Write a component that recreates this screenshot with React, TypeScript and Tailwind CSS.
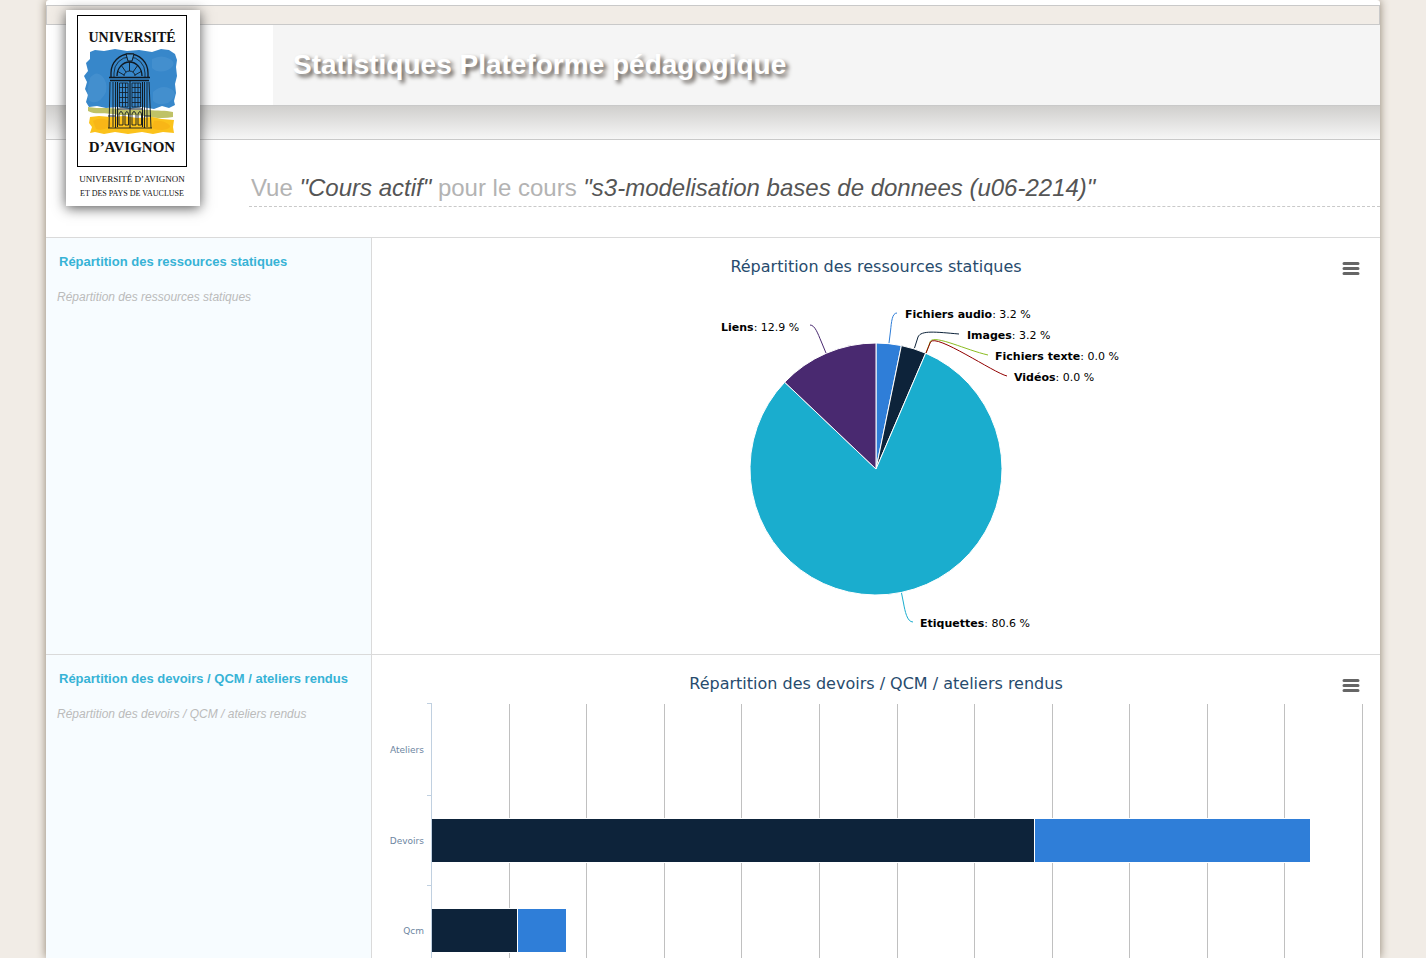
import type { ReactNode } from 'react';

const PIE_RADIUS = 126;

const slices = [
  { name: 'Fichiers audio', from: 0, to: 1 / 31, color: '#2f7ed8' },
  { name: 'Images', from: 1 / 31, to: 2 / 31, color: '#0d233a' },
  { name: 'Etiquettes', from: 2 / 31, to: 27 / 31, color: '#1aadce' },
  { name: 'Liens', from: 27 / 31, to: 1, color: '#492970' },
];

const callouts = [
  { name: 'Fichiers audio', value: '3.2 %', x: 29, y: -151, color: '#2f7ed8', d: 'M21 -156C16 -156 15.500 -147 14.500 -138L13 -126' },
  { name: 'Images', value: '3.2 %', x: 91, y: -130, color: '#0d233a', d: 'M83 -135C60 -137 45 -139 42 -132L38.500 -121' },
  { name: 'Fichiers texte', value: '0.0 %', x: 119, y: -109, color: '#8bbc21', d: 'M112 -114C90 -119 60 -134 54.500 -128L50 -116' },
  { name: 'Vidéos', value: '0.0 %', x: 138, y: -88, color: '#910000', d: 'M131 -93C118 -96 60 -136 54.500 -127L50 -116' },
  { name: 'Etiquettes', value: '80.6 %', x: 44, y: 158, color: '#1aadce', d: 'M37 153C31 153 29 142 27.500 134L25.500 124' },
  { name: 'Liens', value: '12.9 %', x: -155, y: -138, color: '#492970', d: 'M-66 -144C-61 -144 -58 -135 -55 -128L-50 -116' },
];

const bars = [
  { name: 'Ateliers', center: 47, dark: 0, blue: 0 },
  { name: 'Devoirs', center: 138, dark: 64.8, blue: 29.6 },
  { name: 'Qcm', center: 228, dark: 9.2, blue: 5.3 },
];

const gridLines = [1, 2, 3, 4, 5, 6, 7, 8, 9, 10, 11, 12];

function arcPath(from: number, to: number) {
  const point = (t: number) =>
    `${(PIE_RADIUS * Math.sin(t * 2 * Math.PI)).toFixed(2)} ${(-PIE_RADIUS * Math.cos(t * 2 * Math.PI)).toFixed(2)}`;
  return `M0 0L${point(from)}A${PIE_RADIUS} ${PIE_RADIUS} 0 ${to - from > 0.5 ? 1 : 0} 1 ${point(to)}Z`;
}

function Logo() {
  return (
    <svg width="134" height="196" viewBox="0 0 134 196" role="img" aria-label="Université d'Avignon et des Pays de Vaucluse">
      <rect x="11.500" y="5.500" width="109" height="151" fill="#fff" stroke="#000" />
      <path
        fill="#3787ca"
        d="M24 42L29 40L38 41L49 39L61 41L73 40L86 42L95 39L103 40L109 44L111 50L110 57L111 66L109 74L110 83L108 91L109 95L103 98L96 96L88 99L76 97L63 99L51 97L40 98L31 96L23 97L20 92L22 85L19 79L21 72L18 66L22 61L20 53L24 49Z"
      />
      <path fill="#5b9fd6" opacity="0.35" d="M24 68Q30 60 36 66T40 82Q34 94 26 92T24 68ZM86 49Q96 44 104 49T102 60Q92 64 86 58ZM87 82Q96 74 105 79T102 93Q92 96 87 91Z" />
      <path fill="#bfc267" d="M22 97C34 99 43 97 52 99S72 99 82 100S99 100 107 102L107 107C98 109 88 108 79 106S57 106 46 104S30 105 22 101Z" />
      <path fill="#fbc21b" d="M24 107L33 106L45 107L58 106L71 108L86 107L96 109L108 110L107 117L108 123L97 122L87 124L76 122L62 124L49 122L38 124L29 122L24 123L26 117L23 113Z" />
      <path fill="#f6a914" opacity="0.5" d="M27 111Q34 107 41 110T43 117Q36 121 30 119ZM88 111Q96 110 102 114T96 120Q90 120 86 118Z" />
      <g fill="none" stroke="#101820">
        <path strokeWidth="1.300" d="M45 67V63A18.500 19 0 0 1 82 63V67" />
        <path strokeWidth="0.800" d="M48 67V63A15.500 16 0 0 1 79 63V67" />
        <path strokeWidth="1.300" d="M51 66A12.500 14 0 0 1 76 66" />
        <path strokeWidth="0.900" d="M58 66A5.500 5 0 0 1 69 66M63.500 61V52M60 62L55 55M67 62L72 55M58 65L51 61M69 65L76 61" />
        <path strokeWidth="1" fill="#4c95cf" d="M60 44H68L66 51H62Z" />
        <path strokeWidth="1.500" d="M43 67.500H84M44 70.500H83" />
        <path strokeWidth="0.900" d="M44 72L43 118M47 72V117M49.500 72V118M78.500 72V118M81 72V117M83 72L85 118M42 106H49M79 106H85M42 118H86" />
        <path strokeWidth="1.100" d="M51.500 72V117M64 70V118M76.500 72V117M51 99H77" />
        <path strokeWidth="0.800" d="M53.500 73H62V97H53.500ZM66 73H74.500V97H66ZM56.500 73V97M59.500 73V97M69 73V97M72 73V97M53 77.500H62M66 77.500H75M53 82.500H62M66 82.500H75M53 87.500H62M66 87.500H75M53 92.500H62M66 92.500H75" />
        <path strokeWidth="0.900" d="M53 115V104Q55 99 57 104V115ZM59 115V104Q61 99 62.500 104V115ZM66 115V104Q68 99 70 104V115ZM72 115V104Q74 99 75.500 104V115Z" />
      </g>
      <g fill="#111" textAnchor="middle" className="font-['Liberation_Serif',serif]">
        <text x="66" y="32" fontSize="14" fontWeight="700">UNIVERSITÉ</text>
        <text x="66" y="142" fontSize="15" fontWeight="700">D’AVIGNON</text>
        <text x="66" y="172" fontSize="9">UNIVERSITÉ D’AVIGNON</text>
        <text x="66" y="186" fontSize="8">ET DES PAYS DE VAUCLUSE</text>
      </g>
    </svg>
  );
}

function StatSection({ title, children }: { title: string; children: ReactNode }) {
  return (
    <section className="flex border-t border-[#dadada]">
      <div className="w-[326px] shrink-0 border-r border-[#dadada] bg-[#f7fcff] px-[11px] pt-[14px]">
        <h3 className="pl-[2px] text-[13px] leading-5 font-bold text-[#37b3d6]">{title}</h3>
        <p className="pt-[15px] text-[12px] leading-5 text-[#bbb] italic">{title}</p>
      </div>
      <div className="min-w-0 flex-1 font-['DejaVu_Sans',sans-serif]">
        <div className="grid h-12 grid-cols-[1fr_auto_1fr] items-center px-5 pt-[10px]">
          <h4 className="col-start-2 text-base text-[#274b6d]">{title}</h4>
          <button type="button" aria-label="Menu du graphique" className="mt-[2px] justify-self-end">
            <svg width="18" height="14" viewBox="0 0 18 14" className="block" stroke="#666" strokeWidth="3" strokeLinecap="round">
              <path d="M2 2.500H16M2 7.500H16M2 12.500H16" />
            </svg>
          </button>
        </div>
        {children}
      </div>
    </section>
  );
}

function PieChart() {
  return (
    <svg viewBox="-504 -183 1008 368" className="block h-[368px] w-full" fontSize="11">
      {slices.map((s) => (
        <path key={s.name} d={arcPath(s.from, s.to)} fill={s.color} stroke="#fff" strokeLinejoin="round" />
      ))}
      {callouts.map((c) => (
        <g key={c.name}>
          <path d={c.d} fill="none" stroke={c.color} />
          <text x={c.x} y={c.y}>
            <tspan fontWeight="700">{c.name}</tspan>: {c.value}
          </text>
        </g>
      ))}
    </svg>
  );
}

function BarChart() {
  return (
    <div className="pr-[18px] pl-[59px]">
      <svg className="block h-[255px] w-full overflow-visible" fontSize="9">
        <g shapeRendering="crispEdges">
          {gridLines.map((i) => (
            <rect key={i} x={`${(i * 100) / 12}%`} y="1" width="1" height="254" fill="#c0c0c0" />
          ))}
          {bars.map((b) =>
            b.dark > 0 ? (
              <g key={b.name} stroke="#fff">
                <rect x="0.050%" y={b.center - 22.5} width={`${b.dark}%`} height="44" fill="#0d233a" />
                <rect x={`${b.dark + 0.05}%`} y={b.center - 22.5} width={`${b.blue}%`} height="44" fill="#2f7ed8" />
              </g>
            ) : null,
          )}
          <path d="M0.500 0V255M-4 0.500H0M-4 92.500H0M-4 182.500H0" stroke="#c0d0e0" />
        </g>
        {bars.map((b) => (
          <text key={b.name} x="-7" y={b.center + 3} textAnchor="end" fill="#6d869f">
            {b.name}
          </text>
        ))}
      </svg>
    </div>
  );
}

export default function App() {
  return (
    <div className="min-h-screen bg-[#f1ece6] px-[46px] font-['Liberation_Sans',Arial,sans-serif]">
      <main className="relative min-h-screen rounded-t-[3px] bg-white shadow-[0_0_10px_#8e8271]">
        <header>
          <div className="h-[5px]" />
          <div className="h-5 border border-[#c9c9c9] bg-[#f1ece6]" />
          <div className="flex h-20">
            <div className="w-[227px] shrink-0" />
            <div className="flex flex-1 items-center bg-[#f5f5f5] pl-5">
              <h1 className="text-[28px] font-bold text-white [text-shadow:3px_3px_4px_#5c5650]">
                Statistiques Plateforme pédagogique
              </h1>
            </div>
          </div>
          <div className="h-[35px] border-y border-[#c9c9c9] bg-linear-to-b from-[#d0cfcd] to-[#f6f6f6]" />
          <a
            href="#"
            className="absolute top-[10px] left-5 block bg-white shadow-[0_2px_12px_#555]"
          >
            <Logo />
          </a>
        </header>
        <div className="pt-[30px] pb-[30px] pl-[203px]">
          <h2 className="border-b border-dashed border-[#c9c9c9] pl-[2px] text-2xl leading-9 text-[#b3b3b3]">
            Vue <em className="text-[#555]">"Cours actif"</em> pour le cours{' '}
            <em className="text-[#555]">"s3-modelisation bases de donnees (u06-2214)"</em>
          </h2>
        </div>
        <StatSection title="Répartition des ressources statiques">
          <PieChart />
        </StatSection>
        <StatSection title="Répartition des devoirs / QCM / ateliers rendus">
          <BarChart />
        </StatSection>
      </main>
    </div>
  );
}
